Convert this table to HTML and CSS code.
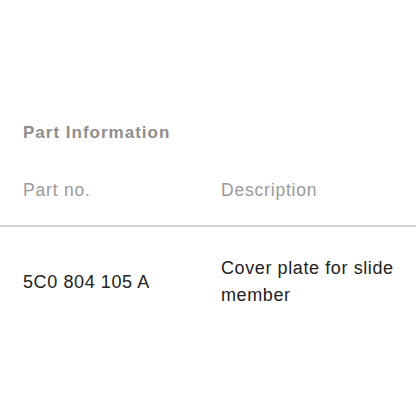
FILE: index.html
```html
<!DOCTYPE html>
<html lang="en">
<head>
    <meta charset="UTF-8">
    <meta name="viewport" content="width=device-width, initial-scale=1.0">
    <title>Part Information</title>
    <link rel="stylesheet" href="styles.css">
</head>
<body>
    <div class="part-info">
        <h2 class="title">Part Information</h2>
        <div class="table">
            <div class="row head">
                <div class="cell col-no">Part no.</div>
                <div class="cell col-desc">Description</div>
            </div>
            <div class="row item">
                <div class="cell col-no">5C0 804 105 A</div>
                <div class="cell col-desc">Cover plate for slide member</div>
            </div>
        </div>
    </div>
</body>
</html>
```

FILE: styles.css
```css
:root {
    --text-muted: #8e8e8e;
    --text-head: #9a9a9a;
    --text-main: #222222;
    --divider: #d2d2d2;
}

* {
    box-sizing: border-box;
    margin: 0;
    padding: 0;
}

body {
    font-family: "Liberation Sans", Arial, sans-serif;
    background: #ffffff;
    width: 416px;
    height: 416px;
    overflow: hidden;
}

.part-info {
    padding-top: 120px;
}

.title {
    font-size: 17px;
    font-weight: bold;
    letter-spacing: 1px;
    color: var(--text-muted);
    padding-left: 23px;
    line-height: 26px;
}

.row {
    display: flex;
    padding-left: 23px;
}

.head {
    padding-top: 31px;
    height: 81px;
    border-bottom: 2px solid var(--divider);
    color: var(--text-head);
    font-size: 17.5px;
    letter-spacing: 0.8px;
    line-height: 26px;
}

.item {
    align-items: center;
    padding-top: 28px;
    color: var(--text-main);
    font-size: 18px;
    letter-spacing: 0.6px;
    line-height: 27px;
}

.col-no {
    width: 198px;
}

.col-desc {
    width: 190px;
}
```
